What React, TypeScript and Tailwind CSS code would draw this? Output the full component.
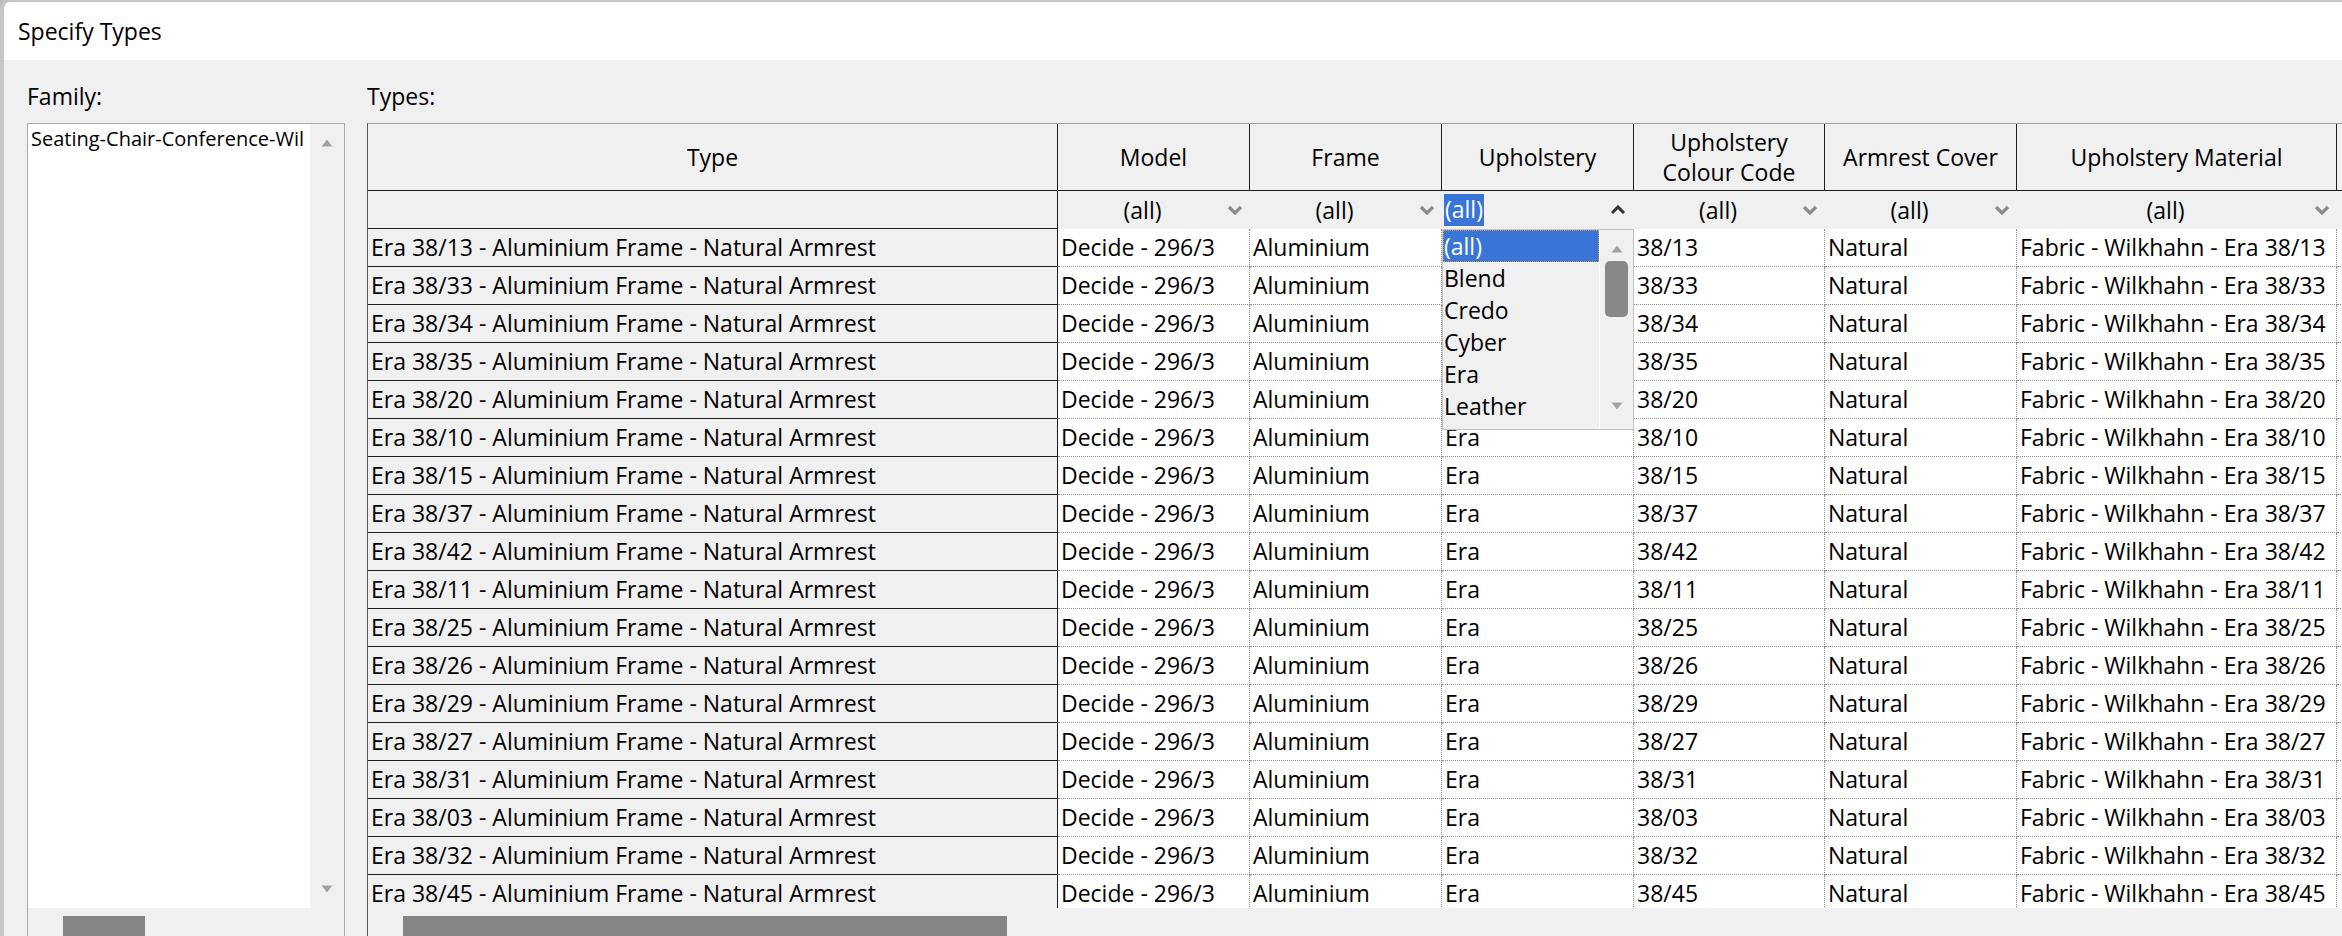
import React from 'react';

const codes = [
  '38/13', '38/33', '38/34', '38/35', '38/20', '38/10', '38/15', '38/37', '38/42',
  '38/11', '38/25', '38/26', '38/29', '38/27', '38/31', '38/03', '38/32', '38/45',
];

const upholsteryOptions = ['Blend', 'Credo', 'Cyber', 'Era', 'Leather'];

function ChevronDown() {
  return (
    <svg width="16" height="10" viewBox="0 0 16 10" className="shrink-0">
      <polyline points="2,2 8,8 14,2" fill="none" stroke="#8c8c8c" strokeWidth="3.2" />
    </svg>
  );
}

function ChevronUp() {
  return (
    <svg width="16" height="10" viewBox="0 0 16 10" className="shrink-0">
      <polyline points="2,8 8,2 14,8" fill="none" stroke="#333333" strokeWidth="3" />
    </svg>
  );
}

function TriUp() {
  return (
    <svg width="12" height="8" viewBox="0 0 12 8">
      <polygon points="6,0.5 11.5,7.5 0.5,7.5" fill="#a3a3a3" />
    </svg>
  );
}

function TriDown() {
  return (
    <svg width="12" height="8" viewBox="0 0 12 8">
      <polygon points="0.5,0.5 11.5,0.5 6,7.5" fill="#a3a3a3" />
    </svg>
  );
}

function FilterCell({ w }: { w: string }) {
  return (
    <div className={`flex items-center shrink-0 h-[38px] ${w}`}>
      <span className="flex-1 text-center">(all)</span>
      <span className="mr-[7px]">
        <ChevronDown />
      </span>
    </div>
  );
}

const head = 'flex items-center justify-center text-center shrink-0 h-full border-r border-b border-[#1e1e1e] leading-[30px]';
const cell = 'shrink-0 h-[38px] border-r border-b border-dotted border-[#8f8f8f] bg-white pl-[3px] leading-[37px] whitespace-nowrap overflow-hidden';

export default function App() {
  return (
    <div className="w-[2342px] h-[936px] overflow-hidden bg-[#bdbdbd] font-['Open_Sans','Noto_Sans',sans-serif] text-[23px] text-black">
      <div className="h-full flex flex-col rounded-tl-[10px] border-t-[2px] border-l-[4px] border-[#c6c6c6] bg-[#f0f0f0] overflow-hidden">
        {/* title bar */}
        <div className="h-[58px] shrink-0 bg-white flex items-center pl-[14px]">
          <span>Specify Types</span>
        </div>

        {/* body */}
        <div className="flex-1 flex pt-[21px] pl-[23px] overflow-hidden">
          {/* family */}
          <div className="w-[318px] shrink-0 flex flex-col">
            <div className="h-[30px] leading-[30px]">Family:</div>
            <div className="mt-[12px] border border-[#a9a9a9] h-[830px] flex flex-col">
              <div className="flex h-[784px]">
                <div className="flex-1 bg-white pl-[3px] text-[20px] leading-[30px] whitespace-nowrap overflow-hidden">
                  Seating-Chair-Conference-Wil
                </div>
                <div className="w-[34px] bg-[#f0f0f0] flex flex-col items-center justify-between pt-[15px] pb-[15px]">
                  <TriUp />
                  <TriDown />
                </div>
              </div>
              <div className="flex-1 bg-[#f0f0f0] pt-[8px] pl-[35px]">
                <div className="w-[82px] h-[30px] bg-[#858585]" />
              </div>
            </div>
          </div>

          {/* types */}
          <div className="ml-[22px] flex-1 flex flex-col min-w-0">
            <div className="h-[30px] leading-[30px]">Types:</div>
            <div className="mt-[12px] border-l border-t border-l-[#555555] border-t-[#9e9e9e] h-[830px] flex flex-col">
              <div className="relative h-[784px] overflow-hidden">
                {/* header */}
                <div className="flex h-[67px] bg-[#f0f0f0]">
                  <div className={`${head} w-[690px]`}>Type</div>
                  <div className={`${head} w-[192px]`}>Model</div>
                  <div className={`${head} w-[192px]`}>Frame</div>
                  <div className={`${head} w-[192px]`}>Upholstery</div>
                  <div className={`${head} w-[191px]`}>
                    Upholstery
                    <br />
                    Colour Code
                  </div>
                  <div className={`${head} w-[192px]`}>Armrest Cover</div>
                  <div className={`${head} w-[320px]`}>Upholstery Material</div>
                  <div className={`${head} w-[300px]`}></div>
                </div>

                {/* filters */}
                <div className="flex h-[38px] bg-[#f0f0f0]">
                  <div className="shrink-0 w-[690px] h-[38px] border-r border-b border-[#1e1e1e]" />
                  <FilterCell w="w-[192px]" />
                  <FilterCell w="w-[192px]" />
                  <div className="flex items-center shrink-0 h-[38px] w-[192px]">
                    <span className="ml-[2px] h-[32px] leading-[31px] px-[1px] bg-[#3875d7] text-white">(all)</span>
                    <span className="flex-1" />
                    <span className="mr-[8px]">
                      <ChevronUp />
                    </span>
                  </div>
                  <FilterCell w="w-[191px]" />
                  <FilterCell w="w-[192px]" />
                  <FilterCell w="w-[320px]" />
                  <div className="shrink-0 w-[300px]" />
                </div>

                {/* rows */}
                {codes.map((c, i) => (
                  <div key={c} className="flex h-[38px]">
                    <div className="shrink-0 w-[690px] h-[38px] border-r border-b border-[#1e1e1e] bg-[#f0f0f0] pl-[3px] leading-[37px] whitespace-nowrap">
                      Era {c} - Aluminium Frame - Natural Armrest
                    </div>
                    <div className={`${cell} w-[192px]`}>Decide - 296/3</div>
                    <div className={`${cell} w-[192px]`}>Aluminium</div>
                    <div className={`${cell} w-[192px]`}>{i >= 5 ? 'Era' : ''}</div>
                    <div className={`${cell} w-[191px]`}>{c}</div>
                    <div className={`${cell} w-[192px]`}>Natural</div>
                    <div className={`${cell} w-[320px]`}>Fabric - Wilkhahn - Era {c}</div>
                    <div className={`${cell} w-[300px]`} />
                  </div>
                ))}

                {/* open dropdown list */}
                <div className="absolute left-[1074px] top-[105px] w-[192px] h-[201px] border border-[#c3c3c3] bg-[#f0f0f0] flex">
                  <div className="w-[156px] flex flex-col">
                    <div className="h-[32px] leading-[30px] bg-[#3875d7] text-white border border-dotted border-[#d8953f]">(all)</div>
                    {upholsteryOptions.map((o) => (
                      <div key={o} className="h-[32px] leading-[32px] pl-[1px]">
                        {o}
                      </div>
                    ))}
                  </div>
                  <div className="flex-1 border-l border-white flex flex-col items-center pt-[15px]">
                    <TriUp />
                    <div className="mt-[8px] w-[23px] h-[56px] rounded-[5px] bg-[#888888]" />
                    <div className="mt-[85px]">
                      <TriDown />
                    </div>
                  </div>
                </div>
              </div>
              <div className="flex-1 bg-[#f0f0f0] pt-[8px] pl-[35px]">
                <div className="w-[604px] h-[30px] bg-[#858585]" />
              </div>
            </div>
          </div>
        </div>
      </div>
    </div>
  );
}
